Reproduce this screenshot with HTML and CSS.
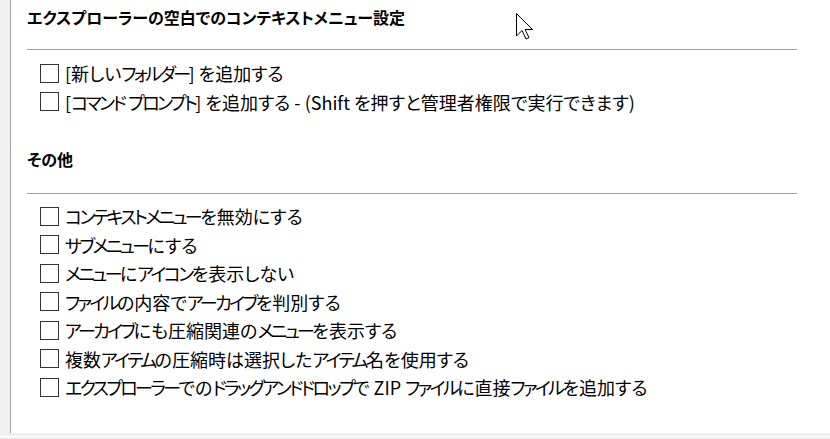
FILE: index.html
```html
<!DOCTYPE html>
<html lang="ja">
<head>
<meta charset="utf-8">
<title>設定</title>
<link rel="stylesheet" href="styles.css">
</head>
<body>
<div class="window">
  <div class="gutter"></div>
  <main class="panel">
    <section class="group group-first">
      <h2 class="group-title">エクスプローラーの空白でのコンテキストメニュー設定</h2>
      <div class="rule"></div>
      <ul class="options">
        <li class="option"><span class="box"></span><span class="label">[新しい<span class="kt">フォルダー</span>] を追加する</span></li>
        <li class="option"><span class="box"></span><span class="label">[<span class="kt">コマンド</span> <span class="kt">プロンプト</span>] を追加する - (Shift を押すと管理者権限で実行できます)</span></li>
      </ul>
    </section>
    <section class="group group-second">
      <h2 class="group-title">その他</h2>
      <div class="rule"></div>
      <ul class="options">
        <li class="option"><span class="box"></span><span class="label"><span class="kt">コンテキストメニュー</span>を無効にする</span></li>
        <li class="option"><span class="box"></span><span class="label"><span class="kt">サブメニュー</span>にする</span></li>
        <li class="option"><span class="box"></span><span class="label"><span class="kt">メニュー</span>に<span class="kt">アイコン</span>を表示しない</span></li>
        <li class="option"><span class="box"></span><span class="label"><span class="kt">ファイル</span>の内容で<span class="kt">アーカイブ</span>を判別する</span></li>
        <li class="option"><span class="box"></span><span class="label"><span class="kt">アーカイブ</span>にも圧縮関連の<span class="kt">メニュー</span>を表示する</span></li>
        <li class="option"><span class="box"></span><span class="label">複数<span class="kt">アイテム</span>の圧縮時は選択した<span class="kt">アイテム</span>名を使用する</span></li>
        <li class="option"><span class="box"></span><span class="label"><span class="kt">エクスプローラー</span>での<span class="kt">ドラッグアンドドロップ</span>で ZIP <span class="kt">ファイル</span>に直接<span class="kt">ファイル</span>を追加する</span></li>
      </ul>
    </section>
    <svg class="cursor" width="20" height="30" viewBox="0 0 20 30" aria-hidden="true">
      <path d="M1.5 1.5 L1.5 24 L7 18.5 L11 27 L14 25.6 L10 17.5 L17.5 17.5 Z" fill="#fff" stroke="#000" stroke-width="1" stroke-linejoin="miter"/>
    </svg>
  </main>
</div>
<div class="footer">
  <div class="footer-band"></div>
  <div class="footer-line"></div>
</div>
</body>
</html>
```

FILE: styles.css
```css
* { box-sizing: border-box; }
html, body {
  margin: 0;
  padding: 0;
}
body {
  width: 830px;
  height: 439px;
  overflow: hidden;
  background: #f0f0f0;
  font-family: "Noto Sans CJK JP", "Noto Sans", sans-serif;
  font-feature-settings: "palt";
  color: #000;
}
.window {
  display: flex;
  height: 433px;
}
.gutter {
  width: 10px;
  background: #f0f0f0;
}
.panel {
  position: relative;
  flex: 1;
  background: #fff;
  border-left: 1px solid #a0a0a0;
  padding: 6px 33px 0 16px;
}
.group-title {
  margin: 0;
  font-family: "Noto Sans", "Noto Sans CJK JP", sans-serif;
  font-size: 16px;
  font-weight: bold;
  line-height: 24px;
  height: 24px;
}
.rule {
  height: 1px;
  background: #a0a0a0;
}
.group-first .rule { margin-top: 19px; }
.group-second { margin-top: 32px; }
.group-second .rule { margin-top: 21px; }
.options {
  list-style: none;
  margin: 8px 0 0 0;
  padding: 0 0 0 13px;
}
.group-first .options { margin-top: 9px; }
.option {
  display: flex;
  align-items: center;
  gap: 6px;
  height: 28.5px;
  font-size: 18px;
  line-height: 20px;
  white-space: nowrap;
}
.kt {
  letter-spacing: -2.6px;
}
.box {
  flex: none;
  width: 19px;
  height: 19px;
  border: 1px solid #333;
  background: #fff;
}
.cursor {
  position: absolute;
  left: 504px;
  top: 12px;
}
.footer {
  height: 6px;
}
.footer-band {
  height: 3px;
  background: #f0f0f0;
}
.footer-line {
  height: 1px;
  background: #fff;
}
```
